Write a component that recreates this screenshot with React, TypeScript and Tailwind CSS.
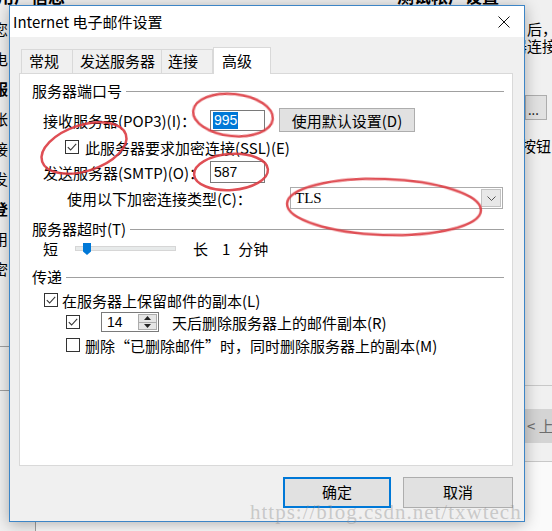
import React from 'react';

const F = "font-['Noto_Sans_CJK_SC',sans-serif]";

function Check({ on }: { on?: boolean }) {
  return (
    <span className="flex h-[14px] w-[14px] shrink-0 items-center justify-center border border-[#333] bg-white">
      {on && (
        <svg width="10" height="8" viewBox="0 0 10 8" fill="none">
          <path d="M0.8 4.2 L3.6 7 L9.2 0.8" stroke="#333" strokeWidth="1.1" />
        </svg>
      )}
    </span>
  );
}

function Group({ label }: { label: string }) {
  return (
    <div className="flex h-[18px] items-center">
      <span className="text-[15px] leading-[18px]">{label}</span>
      <div className="ml-[4px] h-px flex-1 bg-[#a0a0a0]" />
    </div>
  );
}

function Background() {
  const left = ['您', '电', '服', '帐', '接', '发', '登', '用', '密'];
  return (
    <div className="flex h-full flex-col">
      <div className="flex h-[6px] shrink-0 items-end overflow-hidden">
        <span className="ml-[-3px] whitespace-nowrap text-[17px] font-bold leading-[20px]">用户信息</span>
        <span className="ml-[332px] whitespace-nowrap text-[17px] font-bold leading-[20px]">测试帐户设置</span>
      </div>
      <div className="flex flex-1">
        <div className="w-[9px] shrink-0 overflow-hidden pt-[8px]">
          {left.map((c, i) => (
            <div
              key={i}
              className={`ml-[-7px] h-[30px] text-[15px] leading-[30px] ${i === 2 || i === 6 ? 'font-bold' : ''}`}
            >
              {c}
            </div>
          ))}
          <div className="mt-[62px] h-px w-full bg-[#a0a0a0]" />
          <div className="mt-[43px] h-px w-full bg-[#a0a0a0]" />
        </div>
        <div className="flex flex-1 flex-col">
          <div className="flex-1" />
          <div className="flex h-[9px]">
            <div className="w-[26px]" />
            <div className="flex-1 border-l border-[#a0a0a0] bg-[#fafafa]" />
          </div>
        </div>
        <div className="flex w-[28px] shrink-0 flex-col overflow-hidden pt-[14px]">
          <div className="whitespace-nowrap pl-[3px] text-[15px] leading-[17px]">后，</div>
          <div className="ml-[-12px] whitespace-nowrap text-[15px] leading-[17px]">器连接</div>
          <div className="ml-[1px] mt-[41px] flex h-[25px] w-[22px] items-end border border-[#adadad] bg-[#e1e1e1] pb-[3px] pl-[2px] text-[13px] leading-none">
            ...
          </div>
          <div className="ml-[-3px] mt-[17px] whitespace-nowrap text-[15px] leading-[17px]">按钮</div>
          <div className="mt-[231px] h-px w-full bg-[#c8c8c8]" />
          <div className="mt-[23px] flex h-[34px] items-center whitespace-nowrap bg-[#d4d4d4] pl-[3px] text-[15px] text-[#6d6d6d]">
            &lt; 上
          </div>
          <div className="mt-[18px] h-px w-full bg-[#c8c8c8]" />
          <div className="flex-1 bg-[#fafafa]" />
        </div>
      </div>
    </div>
  );
}

function Dialog() {
  return (
    <div className="absolute left-[9px] top-[5px] flex h-[517px] w-[516px] flex-col border border-[#3d85c6] bg-[#f0f0f0] shadow-[0_2px_14px_rgba(0,0,0,0.3)]">
      <div className="flex h-[31px] shrink-0 items-center justify-between bg-white pl-[3px] pr-[14px]">
        <span className="text-[15px] leading-none">Internet 电子邮件设置</span>
        <svg width="12" height="12" viewBox="0 0 12 12">
          <path d="M0.5 0.5 L11.5 11.5 M11.5 0.5 L0.5 11.5" stroke="#111" strokeWidth="1" />
        </svg>
      </div>

      <div className="flex flex-col pl-[9px] pr-[11px] pt-[10px]">
        <div className="flex h-[26px] items-end pl-[2px]">
          <div className="flex h-[24px] w-[52px] items-center border border-b-0 border-[#d9d9d9] pl-[7px] text-[15px]">常规</div>
          <div className="flex h-[24px] w-[89px] items-center border border-b-0 border-l-0 border-[#d9d9d9] pl-[7px] text-[15px]">发送服务器</div>
          <div className="flex h-[24px] w-[51px] items-center border border-b-0 border-l-0 border-[#d9d9d9] pl-[6px] text-[15px]">连接</div>
          <div className="relative z-10 -mb-px flex h-[27px] w-[58px] items-center border border-b-0 border-[#d9d9d9] bg-white pl-[8px] text-[15px]">高级</div>
        </div>

        <div className="h-[393px] border border-[#d9d9d9] bg-white pl-[12px] pr-[8px] pt-[8px] text-[15px]">
          <Group label="服务器端口号" />

          <div className="mt-[8px] flex h-[24px] items-center pl-[11px]">
            <span className="w-[167px] leading-none">接收服务器(POP3)(I)：</span>
            <div className="flex h-[21px] w-[55px] items-center border border-[#7a7a7a] pl-[2px]">
              <span className="bg-[#0078d7] px-[1px] font-['Liberation_Sans',sans-serif] text-[14px] leading-[17px] text-white">995</span>
            </div>
            <div className="ml-[14px] flex h-[24px] w-[136px] items-center justify-center border border-[#adadad] bg-[#e1e1e1] leading-none">
              使用默认设置(D)
            </div>
          </div>

          <div className="mt-[7px] flex h-[16px] items-center pl-[33px]">
            <Check on />
            <span className="ml-[6px] leading-none">此服务器要求加密连接(SSL)(E)</span>
          </div>

          <div className="mt-[6px] flex h-[22px] items-center pl-[11px]">
            <span className="w-[167px] leading-none">发送服务器(SMTP)(O)：</span>
            <div className="flex h-[22px] w-[55px] items-center border border-[#7a7a7a] pl-[3px] font-['Liberation_Sans',sans-serif] text-[14px]">
              587
            </div>
          </div>

          <div className="mt-[4px] flex h-[22px] items-center pl-[35px]">
            <span className="w-[223px] leading-none">使用以下加密连接类型(C)：</span>
            <div className="flex h-[22px] w-[213px] border border-[#acacac] bg-white">
              <span className="flex flex-1 items-center pl-[4px] font-['Liberation_Serif',serif] text-[15px]">TLS</span>
              <div className="m-px flex w-[20px] items-center justify-center border border-[#c3c3c3] bg-[#e8e8e8]">
                <svg width="9" height="5" viewBox="0 0 9 5">
                  <path d="M0.5 0.5 L4.5 4.5 L8.5 0.5" fill="none" stroke="#555" strokeWidth="1" />
                </svg>
              </div>
            </div>
          </div>

          <div className="mt-[11px]">
            <Group label="服务器超时(T)" />
          </div>

          <div className="mt-[2px] flex h-[16px] items-center pl-[11px]">
            <span className="leading-none">短</span>
            <div className="relative ml-[17px] h-[5px] w-[101px] border border-[#d6d6d6] bg-[#e7eaea]">
              <svg className="absolute left-[7px] top-[-4px]" width="8" height="12" viewBox="0 0 8 12">
                <path d="M0 0 H8 V8.5 L4 12 L0 8.5 Z" fill="#0078d7" />
              </svg>
            </div>
            <span className="ml-[17px] leading-none">长</span>
            <span className="ml-[14px] leading-none">1</span>
            <span className="ml-[8px] leading-none">分钟</span>
          </div>

          <div className="mt-[12px]">
            <Group label="传递" />
          </div>

          <div className="mt-[6px] flex h-[16px] items-center pl-[12px]">
            <Check on />
            <span className="ml-[4px] leading-none">在服务器上保留邮件的副本(L)</span>
          </div>

          <div className="mt-[4px] flex h-[20px] items-center pl-[34px]">
            <Check on />
            <div className="ml-[21px] flex h-[20px] w-[58px] border border-[#7a7a7a]">
              <span className="flex flex-1 items-center pl-[5px] font-['Liberation_Sans',sans-serif] text-[14px]">14</span>
              <div className="m-px flex w-[19px] flex-col border border-[#acacac] bg-[#e5e5e5]">
                <div className="flex flex-1 items-center justify-center border-b border-[#acacac]">
                  <svg width="7" height="4" viewBox="0 0 7 4"><path d="M0 4 L3.5 0 L7 4 Z" fill="#222" /></svg>
                </div>
                <div className="flex flex-1 items-center justify-center">
                  <svg width="7" height="4" viewBox="0 0 7 4"><path d="M0 0 L3.5 4 L7 0 Z" fill="#222" /></svg>
                </div>
              </div>
            </div>
            <span className="ml-[13px] leading-none">天后删除服务器上的邮件副本(R)</span>
          </div>

          <div className="mt-[5px] flex h-[16px] items-center pl-[34px]">
            <Check />
            <span className="ml-[5px] leading-none">删除“已删除邮件”时，同时删除服务器上的副本(M)</span>
          </div>
        </div>

        <div className="mt-[11px] flex gap-[12px] pl-[264px]">
          <div className="flex h-[31px] w-[109px] items-center justify-center border-2 border-[#0078d7] bg-[#e1e1e1] text-[15px]">确定</div>
          <div className="flex h-[31px] w-[111px] items-center justify-center border border-[#adadad] bg-[#e1e1e1] text-[15px]">取消</div>
        </div>
      </div>
    </div>
  );
}

export default function App() {
  return (
    <div className={`relative h-[531px] w-[552px] overflow-hidden bg-[#f0f0f0] text-black ${F}`}>
      <Background />
      <Dialog />
      <svg className="pointer-events-none absolute inset-0" width="552" height="531" viewBox="0 0 552 531" fill="none">
        <g stroke="#dc3b42" strokeWidth="2.5" opacity="0.9">
          <ellipse cx="233" cy="115" rx="40" ry="21" transform="rotate(6 233 115)" />
          <ellipse cx="84" cy="148" rx="44" ry="23" transform="rotate(-18 84 148)" />
          <ellipse cx="231" cy="172" rx="37" ry="18" transform="rotate(-4 231 172)" />
          <ellipse cx="384" cy="207" rx="97" ry="28" transform="rotate(2 384 207)" />
        </g>
      </svg>
      <div className="pointer-events-none absolute left-[250px] top-[497px] whitespace-nowrap font-['Liberation_Serif',serif] text-[21px] tracking-[1px] text-[#8a8a8a]/40">
        https://blog.csdn.net/txwtech
      </div>
    </div>
  );
}
